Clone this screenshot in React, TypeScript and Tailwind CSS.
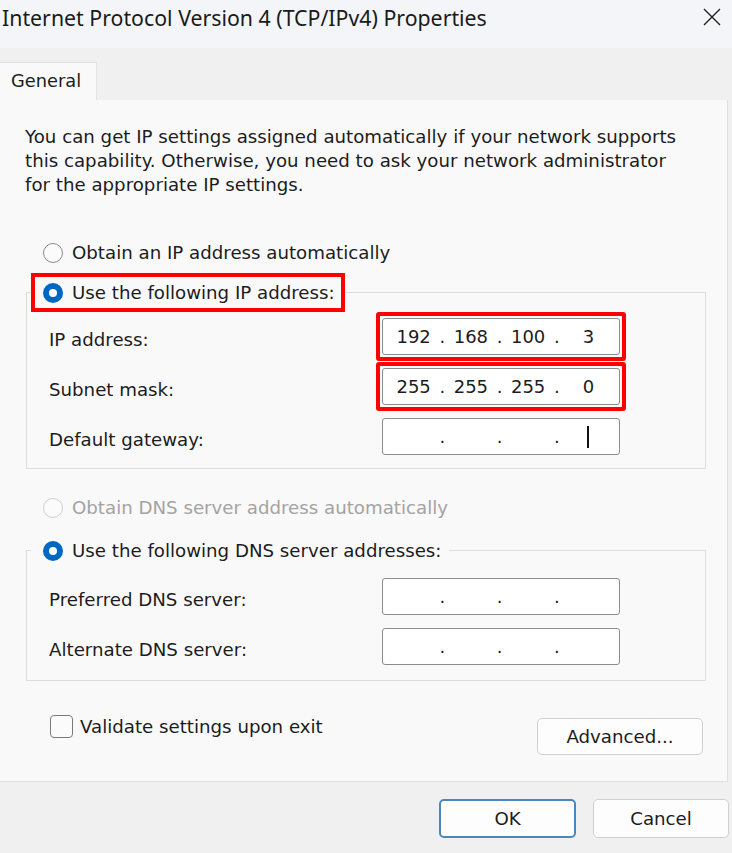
import React from 'react';

const body = { fontFamily: '"DejaVu Sans", Verdana, sans-serif' };
const ui = { fontFamily: '"Noto Sans", "Open Sans", sans-serif' };

function Radio({ checked, disabled }: { checked?: boolean; disabled?: boolean }) {
  if (checked) {
    return (
      <span className="flex h-[20px] w-[20px] shrink-0 items-center justify-center rounded-full bg-[#0067c0]">
        <span className="h-[8px] w-[8px] rounded-full bg-white" />
      </span>
    );
  }
  return (
    <span
      className={`h-[20px] w-[20px] shrink-0 rounded-full border-[1.5px] bg-[#fbfbfb] ${
        disabled ? 'border-[#cfcfcf]' : 'border-[#8a8a8a]'
      }`}
    />
  );
}

function IpField({ parts, cursor }: { parts: string[]; cursor?: boolean }) {
  return (
    <div className="flex h-[37px] w-[238px] items-center rounded-[3px] border border-[#8c8c8c] bg-white pl-[5px] pr-[2px] text-[18px] text-[#1c1c1c]">
      {parts.map((p, i) => (
        <div key={i} className="flex flex-1 items-center">
          <span className="flex flex-1 justify-center">
            {cursor && i === 3 ? <span className="h-[22px] w-[2px] bg-[#111]" /> : p}
          </span>
          {i < 3 && <span className="w-[6px] text-center">.</span>}
        </div>
      ))}
    </div>
  );
}

// red annotation frame around a field, kept out of the layout by negative margins
function Marked({ children }: { children: React.ReactNode }) {
  return <div className="-m-[6px] rounded-[3px] border-4 border-[#ff0000] p-[2px]">{children}</div>;
}

function Row({ label, children }: { label: string; children: React.ReactNode }) {
  return (
    <div className="flex h-[37px] items-center justify-between">
      <span className="pt-[7px]">{label}</span>
      {children}
    </div>
  );
}

export default function App() {
  return (
    <div className="h-[853px] w-[732px] overflow-hidden bg-[#f0f0f0] text-[#1c1c1c]" style={body}>
      {/* Title bar */}
      <div className="flex h-[48px] items-center justify-between bg-[#f3f5f8] pl-[2px] pr-[8px]" style={ui}>
        <span className="-mt-[12px] text-[21.3px] text-[#1a1a1a]">Internet Protocol Version 4 (TCP/IPv4) Properties</span>
        <svg width="22" height="22" viewBox="0 0 22 22" className="-mt-[14px] mr-[1px]">
          <path d="M3 3 L19 19 M19 3 L3 19" stroke="#222" strokeWidth="1.4" />
        </svg>
      </div>

      {/* Tabs */}
      <div className="flex h-[52px] items-end">
        <div className="flex h-[38px] w-[97px] items-center border-r border-t border-[#e3e3e3] bg-[#f9f9f9] pl-[11px] text-[17.8px]">
          General
        </div>
      </div>

      {/* Panel */}
      <div className="h-[682px] w-[728px] border-b border-r border-[#e0e0e0] bg-[#f9f9f9] pt-[25px] text-[18.2px]">
        <p className="pl-[25px] leading-[24px]">
          You can get IP settings assigned automatically if your network supports
          <br />
          this capability. Otherwise, you need to ask your network administrator
          <br />
          for the appropriate IP settings.
        </p>

        <label className="mt-[44px] ml-[43px] flex h-[24px] items-center gap-[9px]">
          <Radio />
          <span>Obtain an IP address automatically</span>
        </label>

        <fieldset className="mt-[8px] ml-[26px] w-[680px] border border-[#dddddd] pb-[13px] pl-[22px] pr-[85px]">
          <legend className="-ml-[18px] flex h-[39px] items-center gap-[9px] border-4 border-[#ff0000] pl-[8px] pr-[6px]">
            <Radio checked />
            <span>Use the following IP address:</span>
          </legend>
          <div className="flex flex-col gap-[13px] pt-[6px]">
            <Row label="IP address:">
              <Marked>
                <IpField parts={['192', '168', '100', '3']} />
              </Marked>
            </Row>
            <Row label="Subnet mask:">
              <Marked>
                <IpField parts={['255', '255', '255', '0']} />
              </Marked>
            </Row>
            <Row label="Default gateway:">
              <IpField parts={['', '', '', '']} cursor />
            </Row>
          </div>
        </fieldset>

        <label className="mt-[27px] ml-[43px] flex h-[24px] items-center gap-[9px] text-[#a3a3a3]">
          <Radio disabled />
          <span>Obtain DNS server address automatically</span>
        </label>

        <fieldset className="mt-[11px] ml-[26px] w-[680px] border border-[#dddddd] pb-[15px] pl-[22px] pr-[85px]">
          <legend className="-ml-[18px] flex h-[39px] items-center gap-[9px] border-4 border-transparent pl-[8px] pr-[4px]">
            <Radio checked />
            <span>Use the following DNS server addresses:</span>
          </legend>
          <div className="flex flex-col gap-[13px] pt-[8px]">
            <Row label="Preferred DNS server:">
              <IpField parts={['', '', '', '']} />
            </Row>
            <Row label="Alternate DNS server:">
              <IpField parts={['', '', '', '']} />
            </Row>
          </div>
        </fieldset>

        <div className="mt-[37px] flex items-start justify-between pl-[50px] pr-[24px]">
          <label className="-mt-[5px] flex items-center gap-[7px]">
            <span className="h-[23px] w-[23px] rounded-[4px] border-[1.5px] border-[#7a7a7a] bg-[#fbfbfb]" />
            <span>Validate settings upon exit</span>
          </label>
          <button className="h-[37px] w-[166px] rounded-[5px] border border-[#d0d0d0] bg-[#fdfdfd] text-[18.2px]">
            Advanced...
          </button>
        </div>
      </div>

      {/* Footer */}
      <div className="flex justify-end gap-[17px] pr-[3px] pt-[17px] text-[18.2px]">
        <button className="h-[39px] w-[137px] rounded-[5px] border-2 border-[#4a87be] bg-[#fdfdfd]">OK</button>
        <button className="h-[39px] w-[136px] rounded-[5px] border border-[#d0d0d0] bg-[#fdfdfd]">Cancel</button>
      </div>
    </div>
  );
}
